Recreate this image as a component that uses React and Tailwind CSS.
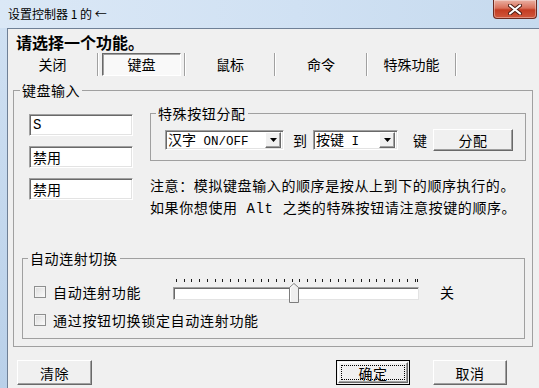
import React from "react";

const raised =
  "bg-[#f0f0f0] border border-t-white border-l-white border-r-[#696969] border-b-[#696969] shadow-[inset_-1px_-1px_0_#a0a0a0]";
const sunken =
  "bg-white border border-t-[#a0a0a0] border-l-[#a0a0a0] border-r-white border-b-white shadow-[inset_1px_1px_0_#696969,inset_-1px_-1px_0_#e3e3e3]";
const mono = "font-['Liberation_Mono',monospace]";

function Arrow() {
  return (
    <div className={`w-[16px] h-[16px] mr-[2px] flex items-center justify-center ${raised}`}>
      <svg width="7" height="4" viewBox="0 0 7 4">
        <polygon points="0,0 7,0 3.5,4" fill="#000" />
      </svg>
    </div>
  );
}

function TextBox({ children, isMono }) {
  return (
    <div
      className={`w-[104px] h-[22px] pl-[3px] flex items-center text-[14px] leading-[18px] ${sunken} ${
        isMono ? mono : ""
      }`}
    >
      {children}
    </div>
  );
}

function Sep() {
  return <div className="w-[2px] h-[23px] mt-[1px] border-l border-l-[#a0a0a0] border-r border-r-white" />;
}

function Check() {
  return (
    <div className="w-[12px] h-[12px] border border-[#8e8f8f] bg-gradient-to-br from-[#dcdcdc] to-[#fbfbfb] shadow-[inset_1px_1px_0_#f4f4f4]" />
  );
}

export default function App() {
  const ticks = Array.from({ length: 32 });
  return (
    <div className="w-[539px] h-[388px] overflow-hidden flex flex-col bg-[#c8dbf0] font-['Noto_Sans_CJK_SC',sans-serif] text-black">
      {/* title bar */}
      <div className="h-[28px] flex items-start bg-[linear-gradient(90deg,#dbe8f6,#d0e1f3_55%,#c6daee)]">
        <div className="pl-[8px] pt-[6px] text-[12px] leading-[16px] whitespace-nowrap">设置控制器 1 的 ←</div>
        <div className="ml-auto mr-[2px] w-[44px] h-[19px] rounded-b-[4px] border border-t-0 border-[#6b2a20] bg-[linear-gradient(180deg,#eab1a3,#d9705a_45%,#c33c22_55%,#d0573c)] flex items-center justify-center shadow-[inset_0_0_0_1px_rgba(255,255,255,0.35)]">
          <svg width="14" height="11" viewBox="0 0 14 11">
            <path d="M2 1.5 L12 9.5 M12 1.5 L2 9.5" stroke="#4a1b12" strokeWidth="4" strokeLinecap="round" />
            <path d="M2 1.5 L12 9.5 M12 1.5 L2 9.5" stroke="#ffffff" strokeWidth="2.2" strokeLinecap="round" />
          </svg>
        </div>
      </div>

      <div className="flex-1 flex">
        <div className="w-[7px] bg-gradient-to-b from-[#cfe0f2] to-[#b9d0e9]" />
        <div className="flex-1 border-l border-t border-[#6f8096] bg-[#f0f0f0] flex flex-col">
          {/* heading */}
          <div className="mt-[3px] h-[20px] pl-[8px] text-[16px] leading-[20px] font-bold">请选择一个功能。</div>

          {/* tabs */}
          <div className="h-[24px] flex text-[14px] leading-[20px]">
            <div className="w-[89px] flex items-center justify-center">关闭</div>
            <Sep />
            <div className="w-[85px] flex items-center justify-center">
              <div className="w-[79px] h-[23px] flex items-center justify-center bg-[#f9f9f9] border border-t-[#696969] border-l-[#696969] border-r-white border-b-white shadow-[inset_1px_1px_0_#a0a0a0]">
                键盘
              </div>
            </div>
            <Sep />
            <div className="w-[88px] flex items-center justify-center">鼠标</div>
            <Sep />
            <div className="w-[90px] flex items-center justify-center">命令</div>
            <Sep />
            <div className="w-[87px] flex items-center justify-center">特殊功能</div>
            <Sep />
          </div>

          {/* outer group */}
          <fieldset className="mt-[6px] ml-[5px] w-[520px] border border-[#a0a0a0] p-0 m-0">
            <legend className="ml-[6px] px-[2px] text-[14px] leading-[16px] tracking-[0.5px]">键盘输入</legend>

            <div className="mt-[7px] pl-[15px] flex items-start">
              {/* left text boxes */}
              <div className="mt-[9px] flex flex-col gap-[10px]">
                <TextBox isMono>S</TextBox>
                <TextBox>禁用</TextBox>
                <TextBox>禁用</TextBox>
              </div>

              {/* right column */}
              <div className="ml-[17px] flex flex-col">
                <fieldset className="w-[376px] border border-[#a0a0a0] p-0 m-0">
                  <legend className="ml-[5px] px-[2px] text-[14px] leading-[16px] tracking-[0.6px]">特殊按钮分配</legend>
                  <div className="mt-[8px] mb-[9px] h-[22px] pl-[14px] flex items-center text-[14px] leading-[18px]">
                    <div className={`w-[119px] h-[20px] flex items-center ${sunken}`}>
                      <span className="flex-1 pl-[2px] whitespace-nowrap">
                        汉字<span className={`${mono} text-[12.5px]`}> ON/OFF</span>
                      </span>
                      <Arrow />
                    </div>
                    <span className="ml-[9px]">到</span>
                    <div className={`ml-[6px] w-[85px] h-[20px] flex items-center ${sunken}`}>
                      <span className="flex-1 pl-[2px] whitespace-nowrap">
                        按键<span className={`${mono} text-[12.5px]`}> I</span>
                      </span>
                      <Arrow />
                    </div>
                    <span className="ml-[15px]">键</span>
                    <div className={`ml-[6px] w-[80px] h-[22px] flex items-center justify-center tracking-[0.5px] ${raised}`}>
                      分配
                    </div>
                  </div>
                </fieldset>

                <div className="mt-[13px] text-[14px] leading-[22px] tracking-[0.6px] whitespace-nowrap">
                  <div>注意：模拟键盘输入的顺序是按从上到下的顺序执行的。</div>
                  <div>
                    如果你想使用<span className={`${mono} text-[14px]`}> Alt </span>之类的特殊按钮请注意按键的顺序。
                  </div>
                </div>
              </div>
            </div>

            {/* auto fire group */}
            <fieldset className="mt-[30px] ml-[8px] mb-[7px] w-[503px] border border-[#a0a0a0] p-0">
              <legend className="ml-[5px] px-[2px] text-[14px] leading-[16px] tracking-[0.6px]">自动连射切换</legend>
              <div className="mt-[12px] mb-[4px] pl-[11px] flex flex-col text-[14px] leading-[18px] tracking-[0.7px]">
                <div className="h-[28px] flex items-center">
                  <div className="w-[139px] flex items-center">
                    <Check />
                    <span className="ml-[7px] whitespace-nowrap">自动连射功能</span>
                  </div>
                  {/* slider */}
                  <div className="self-start mt-[1px] w-[246px] relative">
                    <div className="flex items-start">
                      <div className="ml-[3px] w-[240px] h-[3px] flex justify-between">
                        {ticks.map((_, i) => (
                          <div key={i} className="w-px h-[3px] bg-[#1a1a1a]" />
                        ))}
                      </div>
                      <div className="ml-[1px] w-px h-[3px] bg-[#1a1a1a]" />
                    </div>
                    <div className="mt-[5px] h-[13px] bg-white border border-t-[#a0a0a0] border-l-[#a0a0a0] border-r-[#e3e3e3] border-b-[#e3e3e3] shadow-[inset_1px_1px_0_#696969]" />
                    <svg className="absolute left-[116px] top-[4px]" width="10" height="20" viewBox="0 0 10 20">
                      <path d="M0.5 19.5 L0.5 4.5 L5 0.5 L9.5 4.5 L9.5 19.5 Z" fill="#efefef" stroke="#7d7d7d" />
                      <path d="M1.5 18.5 L1.5 4.9 L5 1.8" fill="none" stroke="#ffffff" />
                    </svg>
                  </div>
                  <span className="ml-[21px]">关</span>
                </div>
                <div className="h-[28px] flex items-center">
                  <Check />
                  <span className="ml-[7px] whitespace-nowrap">通过按钮切换锁定自动连射功能</span>
                </div>
              </div>
            </fieldset>
          </fieldset>

          {/* bottom buttons */}
          <div className="mt-[13px] pl-[9px] flex text-[14px] leading-[18px] tracking-[0.5px]">
            <div className={`w-[75px] h-[25px] flex items-center justify-center ${raised}`}>清除</div>
            <div className="ml-[244px] w-[74px] h-[25px] border border-black p-[1px] flex">
              <div className={`flex-1 flex items-center justify-center ${raised} p-[2px]`}>
                <div className="w-full h-full border border-dotted border-black flex items-center justify-center">确定</div>
              </div>
            </div>
            <div className={`ml-[23px] w-[74px] h-[25px] flex items-center justify-center ${raised}`}>取消</div>
          </div>
        </div>
      </div>
    </div>
  );
}
